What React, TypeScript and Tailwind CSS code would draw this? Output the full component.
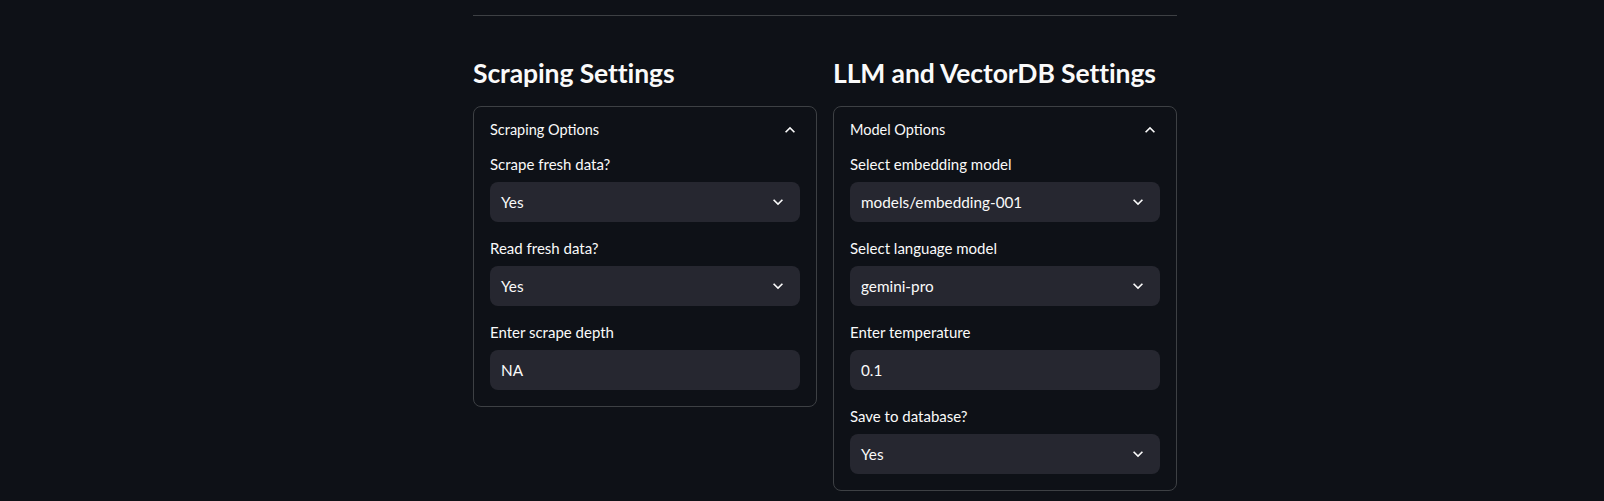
import React from "react";

const font = { fontFamily: '"Lato", "Noto Sans", sans-serif' };

function ChevronDown() {
  return (
    <svg width="20" height="20" viewBox="0 0 24 24" className="shrink-0">
      <path d="M7.41 8.59 12 13.17l4.59-4.58L18 10l-6 6-6-6z" fill="#fafafa" />
    </svg>
  );
}

function ChevronUp() {
  return (
    <svg width="20" height="20" viewBox="0 0 24 24" className="shrink-0">
      <path d="M7.41 15.41 12 10.83l4.59 4.58L18 14l-6-6-6 6z" fill="#fafafa" />
    </svg>
  );
}

function Field({ label, value, select }: { label: string; value: string; select?: boolean }) {
  return (
    <div className="flex flex-col">
      <div className="h-6 mb-1 leading-[20px] text-[15px] text-[#fafafa]">{label}</div>
      <div className="h-10 rounded-lg bg-[#262730] flex items-center justify-between pl-[11px] pr-[12px] text-[15.3px] text-[#fafafa]">
        <span>{value}</span>
        {select && <ChevronDown />}
      </div>
    </div>
  );
}

function Panel({
  title,
  header,
  fields,
}: {
  title: string;
  header: string;
  fields: { label: string; value: string; select?: boolean }[];
}) {
  return (
    <div className="flex flex-col">
      <h3 className="text-[26.5px] font-bold leading-[34px] text-[#fafafa] pt-[7px] pb-[16px] tracking-[-0.1px]">
        {title}
      </h3>
      <div className="border border-[#3d4044] rounded-lg">
        <div className="flex items-center justify-between px-4 pt-3 pb-[13px] leading-[22px] text-[14.5px] text-[#fafafa]">
          <span>{header}</span>
          <ChevronUp />
        </div>
        <div className="flex flex-col gap-4 px-4 pb-4">
          {fields.map((f) => (
            <Field key={f.label} {...f} />
          ))}
        </div>
      </div>
    </div>
  );
}

export default function App() {
  return (
    <div className="min-h-[501px] w-full bg-[#0e1117]" style={font}>
      <div className="ml-[473px] w-[704px] pt-[15px]">
        <div className="h-px bg-[#3d4044]" />
        <div className="grid grid-cols-2 gap-4 mt-[33px] items-start">
          <Panel
            title="Scraping Settings"
            header="Scraping Options"
            fields={[
              { label: "Scrape fresh data?", value: "Yes", select: true },
              { label: "Read fresh data?", value: "Yes", select: true },
              { label: "Enter scrape depth", value: "NA" },
            ]}
          />
          <Panel
            title="LLM and VectorDB Settings"
            header="Model Options"
            fields={[
              { label: "Select embedding model", value: "models/embedding-001", select: true },
              { label: "Select language model", value: "gemini-pro", select: true },
              { label: "Enter temperature", value: "0.1" },
              { label: "Save to database?", value: "Yes", select: true },
            ]}
          />
        </div>
      </div>
    </div>
  );
}
